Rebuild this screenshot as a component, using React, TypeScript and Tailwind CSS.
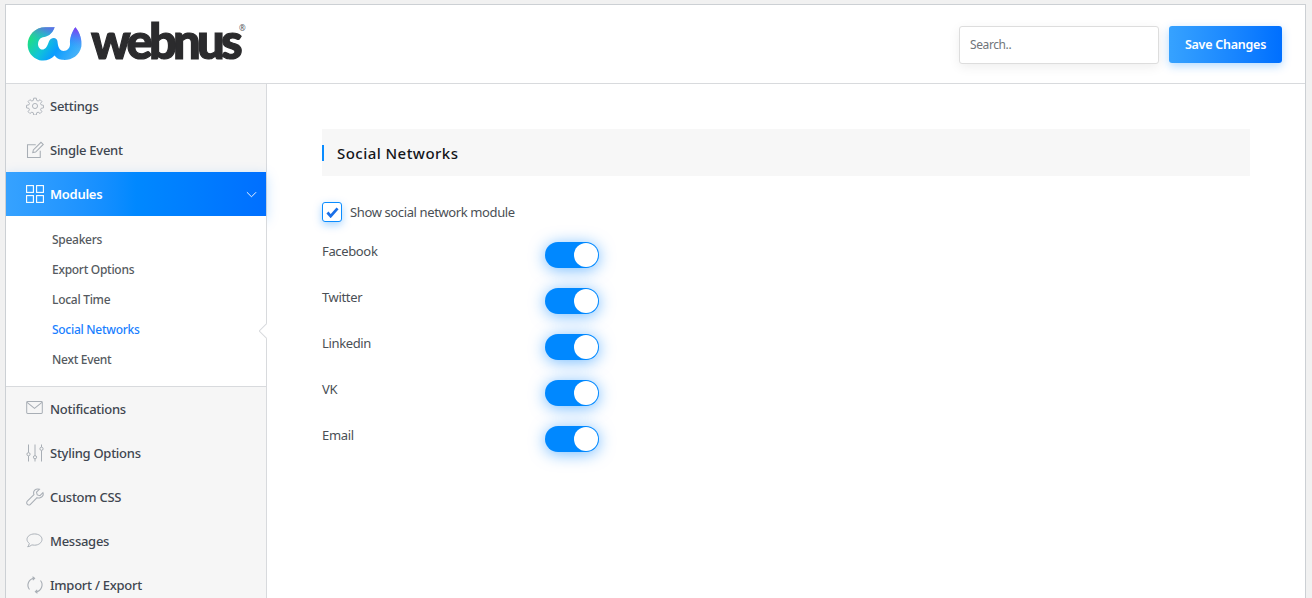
import React from "react";

const iconClass = "w-[18px] h-[18px] text-[#a8aeb5] shrink-0";

const GearIcon = () => (
  <svg viewBox="0 0 24 24" fill="none" stroke="currentColor" strokeWidth="1.2" className={iconClass}>
    <circle cx="12" cy="12" r="3.4" />
    <path d="M10.3 1.5h3.4l.6 3.1 1.9.8 2.6-1.8 2.4 2.4-1.8 2.6.8 1.9 3.1.6v3.4l-3.1.6-.8 1.9 1.8 2.6-2.4 2.4-2.6-1.8-1.9.8-.6 3.1h-3.4l-.6-3.1-1.9-.8-2.6 1.8-2.4-2.4 1.8-2.6-.8-1.9-3.1-.6v-3.4l3.1-.6.8-1.9-1.8-2.6 2.4-2.4 2.6 1.8 1.9-.8z" />
  </svg>
);

const EditIcon = () => (
  <svg viewBox="0 0 24 24" fill="none" stroke="currentColor" strokeWidth="1.4" className={iconClass}>
    <path d="M19 13v9H2V5h11" />
    <path d="M9 15.5l.8-3.6L20 1.8l3 2.8L12.8 14.8z" />
  </svg>
);

const GridIcon = () => (
  <svg viewBox="0 0 18 18" fill="none" stroke="currentColor" strokeWidth="1.1" className="w-[18px] h-[18px] text-white shrink-0">
    <rect x="0.6" y="0.6" width="6.8" height="6.8" />
    <rect x="10.6" y="0.6" width="6.8" height="6.8" />
    <rect x="0.6" y="10.6" width="6.8" height="6.8" />
    <rect x="10.6" y="10.6" width="6.8" height="6.8" />
  </svg>
);

const MailIcon = () => (
  <svg viewBox="0 0 18 14" fill="none" stroke="currentColor" strokeWidth="1.1" className="w-[17px] h-[13px] text-[#a8aeb5] shrink-0 mr-px -mt-1">
    <rect x="0.6" y="0.6" width="16.8" height="12.8" rx="1" />
    <path d="M1 1.5l8 6.5 8-6.5" />
  </svg>
);

const SlidersIcon = () => (
  <svg viewBox="0 0 18 18" fill="none" stroke="currentColor" strokeWidth="1" className={iconClass}>
    <path d="M2.5 0.5v8M2.5 12v5.5M9 0.5v11M9 15v2.5M15.5 0.5v2.5M15.5 6.5v11" />
    <circle cx="2.5" cy="10.2" r="1.6" />
    <circle cx="9" cy="13.2" r="1.6" />
    <circle cx="15.5" cy="4.8" r="1.6" />
  </svg>
);

const WrenchIcon = () => (
  <svg viewBox="0 0 24 24" fill="none" stroke="currentColor" strokeWidth="1.4" className={iconClass}>
    <path d="M22.6 6.2l-4 4-3.6-1-1-3.6 4-4c-3-1-6.500 0-7.500 3-.5 1.500-.4 3 .1 4.200L1.800 17.600c-1.200 1.200-1.200 3 0 4.100 1.200 1.200 3 1.200 4.100 0l8.800-8.800c1.300.5 2.800.6 4.200.1 3-1 4.700-3.800 3.700-6.800z" />
  </svg>
);

const ChatIcon = () => (
  <svg viewBox="0 0 18 16" fill="none" stroke="currentColor" strokeWidth="1" className="w-[17px] h-[15px] text-[#a8aeb5] shrink-0 mr-px -mt-0.5">
    <path d="M9 1C4.500 1 1 3.500 1 6.800c0 1.700 1 3.200 2.500 4.300-.2 1.300-1 2.600-1.800 3.600 1.700-.2 3.300-1 4.500-2 .9.200 1.800.3 2.800.3 4.500 0 8-2.800 8-6.200S13.500 1 9 1z" />
  </svg>
);

const SyncIcon = () => (
  <svg viewBox="0 0 18 18" fill="none" stroke="currentColor" strokeWidth="1.1" className={iconClass}>
    <path d="M3.500 13.500A7 7 0 0 1 8 2.200M14.500 4.500A7 7 0 0 1 10 15.800" />
    <path d="M6.500 0.800L8.600 2.300 6.800 4.200M11.500 17.200L9.400 15.700 11.200 13.800" />
  </svg>
);

const logoPath =
  "M108 27C100 50 85 55 72 57C62 60 58 68 58 78C58 88 66 96 74 94C86 90 88 76 92 68C98 58 112 56 116 68C118 80 118 92 130 98C145 100 155 90 154 75C153 60 160 40 170 27C185 45 190 65 188 85C182 115 155 128 130 125C118 123 112 118 108 112C95 125 80 130 62 126C40 120 27 100 27 80C27 50 50 27 80 27Z";

const Logo = () => (
  <div className="flex items-center">
    <svg viewBox="25 25 165 105" className="w-[55px] h-[36px] shrink-0">
      <defs>
        <linearGradient id="wg" gradientUnits="userSpaceOnUse" x1="45" y1="35" x2="170" y2="120">
          <stop offset="0" stopColor="#20e07c" />
          <stop offset="0.35" stopColor="#10c4d8" />
          <stop offset="0.6" stopColor="#0a9cff" />
          <stop offset="1" stopColor="#4ab2f8" />
        </linearGradient>
        <linearGradient id="wp" gradientUnits="userSpaceOnUse" x1="178" y1="30" x2="165" y2="90">
          <stop offset="0" stopColor="#8a35f0" />
          <stop offset="1" stopColor="#4a90f8" stopOpacity="0" />
        </linearGradient>
      </defs>
      <path d={logoPath} fill="url(#wg)" />
      <path d={logoPath} fill="url(#wp)" />
    </svg>
    <span className="ml-[9px] font-['Lato',sans-serif] font-black text-[49px] leading-none text-[#2b2b2d] tracking-[-3.8px] -mt-[8px] [-webkit-text-stroke:1.2px_#2b2b2d]">
      webnus
    </span>
    <span className="self-start mt-[0px] ml-[0px] text-[8px] leading-none text-[#55585c]">®</span>
  </div>
);

const Toggle = () => (
  <div className="w-[54px] h-[26px] rounded-full bg-[#0088ff] shadow-[0_2px_16px_rgba(0,132,255,0.55)] flex items-center justify-end pr-px">
    <div className="w-6 h-6 rounded-full bg-white" />
  </div>
);

const topItems = [
  { label: "Settings", icon: <GearIcon /> },
  { label: "Single Event", icon: <EditIcon /> },
];

const subItems = ["Speakers", "Export Options", "Local Time", "Social Networks", "Next Event"];

const bottomItems = [
  { label: "Notifications", icon: <MailIcon /> },
  { label: "Styling Options", icon: <SlidersIcon /> },
  { label: "Custom CSS", icon: <WrenchIcon /> },
  { label: "Messages", icon: <ChatIcon /> },
  { label: "Import / Export", icon: <SyncIcon /> },
];

const networks = ["Facebook", "Twitter", "Linkedin", "VK", "Email"];

const MenuItem = ({ label, icon }: { label: string; icon: React.ReactNode }) => (
  <div className="h-11 shrink-0 flex items-center gap-[6px] pl-5 text-[13px] font-medium tracking-[-0.27px] text-[#3f4650]">
    {icon}
    <span className="mt-[2px]">{label}</span>
  </div>
);

export default function App() {
  return (
    <div className="h-[598px] overflow-hidden bg-[#f1f1f1] pt-1 pl-[5px] pr-[6px] font-['Noto_Sans',sans-serif]">
      <div className="h-[594px] bg-white border border-b-0 border-[#ccd0d4] flex flex-col overflow-hidden">
        <header className="h-[79px] shrink-0 border-b border-[#d8dadd] flex items-center justify-between pl-[21px] pr-[23px]">
          <Logo />
          <div className="flex items-start gap-[10px] mt-[1px]">
            <div className="w-[200px] h-[38px] border border-[#dddddd] rounded-[3px] bg-white shadow-[0_3px_12px_rgba(0,0,0,0.07)] flex items-center pl-[10px] text-[12px] tracking-[-0.4px] text-[#70757a]">
              Search..
            </div>
            <div className="w-[113px] h-[37px] rounded-[3px] bg-linear-to-r from-[#36a2ff] to-[#006fff] shadow-[0_3px_10px_rgba(0,132,255,0.3)] flex items-center justify-center pt-[2px] text-[12.5px] font-semibold tracking-[-0.25px] text-white">
              Save Changes
            </div>
          </div>
        </header>
        <div className="flex flex-1 min-h-0">
          <aside className="w-[261px] shrink-0 bg-[#f6f6f6] border-r border-[#d8dadd] flex flex-col">
            {topItems.map((item) => (
              <MenuItem key={item.label} label={item.label} icon={item.icon} />
            ))}
            <div className="h-11 shrink-0 flex items-center gap-[6px] pl-5 pr-[9px] text-[13px] font-semibold tracking-[-0.27px] text-white bg-linear-to-r from-[#36a2ff] via-[#0088ff] to-[#006fff] shadow-[0_4px_12px_rgba(0,132,255,0.25)] relative">
              <GridIcon />
              <span className="flex-1 mt-[2px]">Modules</span>
              <svg viewBox="0 0 12 7" fill="none" stroke="currentColor" strokeWidth="1" className="w-[11px] h-[7px]">
                <path d="M1 1l5 5 5-5" />
              </svg>
            </div>
            <div className="h-[171px] shrink-0 bg-white border-b border-[#d8dadd] -mr-px border-r pt-[9px] relative">
              {subItems.map((label) => (
                <div
                  key={label}
                  className={`h-[30px] flex items-center pl-[46px] text-[12px] tracking-[-0.28px] font-medium ${
                    label === "Social Networks" ? "text-[#1a7fff]" : "text-[#555a60]"
                  }`}
                >
                  {label}
                </div>
              ))}
              <div className="absolute right-[-1px] top-[107px] w-[8px] h-[16px] overflow-hidden">
                <div className="w-[12px] h-[12px] mt-[2px] ml-[2px] rotate-45 bg-white border border-[#d8dadd]" />
              </div>
            </div>
            <div>
              {bottomItems.map((item) => (
                <MenuItem key={item.label} label={item.label} icon={item.icon} />
              ))}
            </div>
          </aside>
          <main className="flex-1 pt-[45px] pl-[55px] pr-[55px]">
            <div className="h-[47px] bg-[#f7f7f7] flex items-center">
              <div className="w-[2px] h-4 bg-[#0a8cff]" />
              <h2 className="ml-[13px] mt-[2px] text-[15px] font-medium text-[#14161a] tracking-[0.45px]">Social Networks</h2>
            </div>
            <div className="mt-[26px] h-5 flex items-center">
              <div className="w-5 h-5 rounded-[3px] border border-[#0a8cff] bg-white shadow-[0_3px_8px_rgba(0,132,255,0.35)] flex items-center justify-center">
                <svg viewBox="0 0 14 12" fill="none" stroke="#1a6fe8" strokeWidth="3" className="w-[13px] h-[11px]">
                  <path d="M1.500 6l3.500 4L12.500 1.500" />
                </svg>
              </div>
              <span className="ml-2 text-[13px] leading-[18px] tracking-[-0.38px] text-[#4a4f55]">Show social network module</span>
            </div>
            <div className="mt-5 flex flex-col gap-5">
              {networks.map((name) => (
                <div key={name} className="flex items-start h-[26px]">
                  <span className="w-[223px] text-[13px] tracking-[-0.35px] leading-[18px] text-[#4a4f55]">{name}</span>
                  <Toggle />
                </div>
              ))}
            </div>
          </main>
        </div>
      </div>
    </div>
  );
}
